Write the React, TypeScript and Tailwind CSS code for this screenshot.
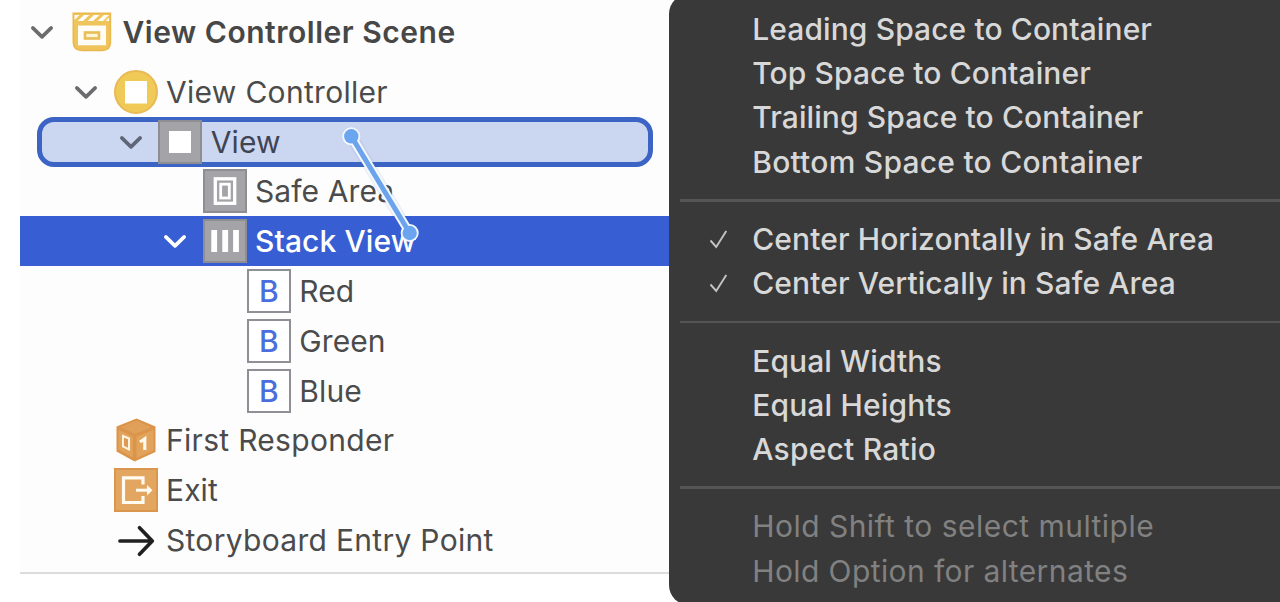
import type { ReactNode } from "react";

const INK = "text-[#4b4b4b]";

function Chevron({ color }: { color: string }) {
  return (
    <svg width="24" height="16" viewBox="0 0 24 16" fill="none" className="block">
      <path d="M2.8 3.9L12 12.9L21.2 3.9" stroke={color} strokeWidth="3.6" strokeLinecap="round" strokeLinejoin="round" />
    </svg>
  );
}

function SceneIcon() {
  return (
    <svg width="40" height="40" viewBox="0 0 40 40" className="block">
      <path d="M0.5 0.5H39.2V30Q39.2 39.2 30 39.2H10Q0.5 39.2 0.5 30Z" fill="#e9b94f" />
      <path d="M2 2H37.7V29.5Q37.7 37.7 29.5 37.7H10.5Q2 37.7 2 29.5Z" fill="#efc45a" />
      <g fill="#fffdf6">
        <path d="M2.5 3H7.5L2.5 8Z" />
        <path d="M12 3H17.5L11 9H5.5Z" />
        <path d="M22 3H27.5L21 9H15.5Z" />
        <path d="M32 3H37L31 9H25.5Z" />
        <path d="M37 5.5V9H33.5Z" />
        <path d="M6 13.5H34V33.3H6Z" />
      </g>
      <rect x="13" y="20.5" width="14" height="6" fill="#fff6d8" stroke="#e9bd57" strokeWidth="2.6" />
    </svg>
  );
}

function ControllerIcon() {
  return (
    <svg width="44" height="44" viewBox="0 0 44 44" className="block">
      <circle cx="22" cy="22" r="21" fill="#f0ca57" stroke="#e9b955" strokeWidth="2" />
      <rect x="11" y="11" width="22" height="22.5" fill="#fff" />
    </svg>
  );
}

function GreyTile({ children }: { children: ReactNode }) {
  return (
    <svg width="44" height="44" viewBox="0 0 44 44" className="block">
      <rect x="1" y="1" width="42" height="42" fill="#a4a3a8" stroke="#8d8d92" strokeWidth="2" />
      {children}
    </svg>
  );
}

function ButtonTile() {
  return (
    <div className="flex h-[44px] w-[44px] items-center justify-center border-2 border-[#8f8f95] bg-white text-[30px] leading-none font-medium text-[#4a6fdc]">
      B
    </div>
  );
}

function CubeIcon() {
  return (
    <svg width="44" height="44" viewBox="0 0 44 44" className="block">
      <path d="M22.5 0.5L41.5 8.5V34L20.5 43.5L2.5 33.5V8.5Z" fill="#db944a" />
      <path d="M22.5 2.8L37.5 9.3L21 16L6.5 9.3Z" fill="#e0a05a" />
      <path d="M4.5 12L18.8 18.5V39.5L4.5 31.5Z" fill="#e2a45d" />
      <path d="M22.5 18.5L39.5 12V32.5L22.5 40Z" fill="#e2a45d" />
      <path d="M9 18L15 20.5V31.5L9 28.5Z" fill="#dc9a52" stroke="#fff4df" strokeWidth="2" />
      <path d="M26 24L30.8 20.8V32" fill="none" stroke="#fff8ec" strokeWidth="3.2" />
    </svg>
  );
}

function ExitIcon() {
  return (
    <svg width="44" height="44" viewBox="0 0 44 44" className="block">
      <rect x="1" y="1" width="42" height="42" fill="#e2a660" stroke="#d9964c" strokeWidth="2" />
      <path d="M29 16.500V9.8H9.5V34.5H29V28" fill="none" stroke="#fffbf0" strokeWidth="3.2" />
      <path d="M22 22.2H34" stroke="#fffbf0" strokeWidth="3" />
      <path d="M33 17L38.5 22.2L33 27.5Z" fill="#fffbf0" />
    </svg>
  );
}

function ArrowIcon() {
  return (
    <svg width="44" height="44" viewBox="0 0 44 44" className="block">
      <path d="M6 23H38M25.500 9.8L38.3 23L25.500 36.200" fill="none" stroke="#202020" strokeWidth="3.7" strokeLinecap="round" strokeLinejoin="round" />
    </svg>
  );
}

type RowProps = {
  icon: ReactNode;
  label: string;
  pad: string;
  tracking?: string;
  chevron?: string;
  tone?: string;
};

function Row({ icon, label, pad, tracking = "tracking-[0.1px]", chevron, tone = INK }: RowProps) {
  return (
    <div className={`flex h-[49.8px] shrink-0 items-center ${pad}`}>
      <div className="mr-[15.5px] w-[24px] shrink-0">{chevron && <Chevron color={chevron} />}</div>
      <div className="shrink-0">{icon}</div>
      <span className={`ml-[8.5px] text-[30px] leading-none whitespace-pre ${tone} ${tracking}`}>{label}</span>
    </div>
  );
}

function Outline() {
  return (
    <section className="ml-[20px] flex h-[574px] w-[649.5px] shrink-0 flex-col border-b-2 border-[#dcdcdc] bg-[#fdfdfd]">
      <div className="flex h-[67px] shrink-0 items-center pb-[4px] pl-[10px]">
        <Chevron color="#6c6c6e" />
        <div className="ml-[18px]"><SceneIcon /></div>
        <span className="ml-[10.5px] text-[30px] leading-none font-semibold tracking-[0.52px] whitespace-pre text-[#474747]">View Controller Scene</span>
      </div>
      <Row pad="pl-[54px]" tracking="tracking-[0.3px]" chevron="#6c6c6e" icon={<ControllerIcon />} label="View Controller" />
      <div className="mr-[17px] ml-[16.5px] flex h-[49.8px] shrink-0 items-center rounded-[17px] border-[5.5px] border-[#3c64c4] bg-[#cbd6f0]">
        <Row
          pad="pl-[77.3px]" chevron="#5f6678" tone="text-[#3f4453]" label="View"
          icon={<GreyTile><rect x="11" y="11" width="22" height="22" fill="#fff" /></GreyTile>}
        />
      </div>
      <Row
        pad="pl-[143px]" label="Safe Area"
        icon={
          <GreyTile>
            <rect x="12.3" y="9.8" width="19.4" height="24.5" fill="none" stroke="#fff" strokeWidth="3.3" />
            <rect x="17.7" y="15.2" width="8.6" height="13.8" fill="none" stroke="#fff" strokeWidth="2.8" />
          </GreyTile>
        }
      />
      <div className="bg-[#375ed2]">
        <Row
          pad="pl-[143px]" chevron="#ffffff" tone="text-white font-medium" label="Stack View"
          icon={
            <GreyTile>
              <path d="M11.2 11V33M22.2 11V33M33 11V33" stroke="#fff" strokeWidth="5.8" />
            </GreyTile>
          }
        />
      </div>
      <Row pad="pl-[187.3px]" icon={<ButtonTile />} label="Red" />
      <Row pad="pl-[187.3px]" icon={<ButtonTile />} label="Green" />
      <Row pad="pl-[187.3px]" icon={<ButtonTile />} label="Blue" />
      <Row pad="pl-[54px]" tracking="tracking-[0.3px]" icon={<CubeIcon />} label="First Responder" />
      <Row pad="pl-[54px]" icon={<ExitIcon />} label="Exit" />
      <Row pad="pl-[54px]" tracking="tracking-[0.3px]" icon={<ArrowIcon />} label="Storyboard Entry Point" />
    </section>
  );
}

function Connection() {
  return (
    <svg width="90" height="130" viewBox="335 120 90 130" className="absolute top-[120px] left-[335px]">
      <path d="M351.3 136.3L409.7 233" stroke="#5b6f9a" strokeOpacity="0.1" strokeWidth="12" />
      <path d="M351.3 136.3L409.7 233" stroke="#f4f8ff" strokeWidth="9" />
      <circle cx="351.3" cy="136.3" r="9" fill="#f4f8ff" />
      <circle cx="409.7" cy="233" r="9" fill="#f4f8ff" />
      <path d="M351.3 136.3L409.7 233" stroke="#6ba3ec" strokeWidth="5" />
      <circle cx="351.3" cy="136.3" r="7.2" fill="#6ba5f0" />
      <circle cx="409.7" cy="233" r="7.2" fill="#6ba5f0" />
    </svg>
  );
}

type MenuItemProps = { label: string; checked?: boolean; dim?: boolean; tracking?: string };

function MenuItem({ label, checked, dim, tracking = "tracking-[0.1px]" }: MenuItemProps) {
  return (
    <div className="flex h-[44.2px] items-center">
      <div className="flex w-[83px] shrink-0 pl-[40px]">
        {checked && (
          <svg width="20" height="20" viewBox="0 0 20 20" fill="none">
            <path d="M1.5 11.5L7.2 18L17.3 2" stroke="#c4c4c4" strokeWidth="1.9" />
          </svg>
        )}
      </div>
      <span className={`text-[30px] leading-none whitespace-pre ${tracking} ${dim ? "text-[#818181]" : "font-medium text-[#d8d8d8]"}`}>{label}</span>
    </div>
  );
}

function Separator() {
  return (
    <div className="flex h-[33.2px] items-center pl-[11px]">
      <div className="h-[2.5px] w-full bg-[#555555]" />
    </div>
  );
}

function Menu() {
  return (
    <section className="-mt-[6px] -ml-[0.3px] h-[611px] w-[640px] shrink-0 rounded-[20px] bg-[#393939] pt-[13px]">
      <MenuItem label="Leading Space to Container" />
      <MenuItem label="Top Space to Container" />
      <MenuItem label="Trailing Space to Container" />
      <MenuItem label="Bottom Space to Container" tracking="tracking-[0.24px]" />
      <Separator />
      <MenuItem label="Center Horizontally in Safe Area" checked />
      <MenuItem label="Center Vertically in Safe Area" checked />
      <Separator />
      <MenuItem label="Equal Widths" />
      <MenuItem label="Equal Heights" tracking="tracking-[0.16px]" />
      <MenuItem label="Aspect Ratio" tracking="tracking-[0.22px]" />
      <Separator />
      <MenuItem label="Hold Shift to select multiple" dim tracking="tracking-[0.47px]" />
      <MenuItem label="Hold Option for alternates" dim tracking="tracking-[0.4px]" />
    </section>
  );
}

export default function App() {
  return (
    <main className="relative flex h-[602px] w-[1280px] items-start overflow-hidden bg-white font-['Inter',sans-serif]">
      <Outline />
      <Menu />
      <Connection />
    </main>
  );
}
